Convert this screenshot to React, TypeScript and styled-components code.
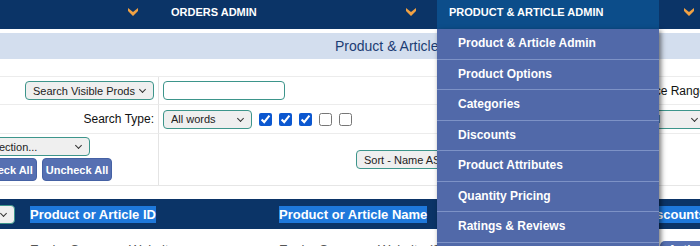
import React from "react";
import styled, { createGlobalStyle } from "styled-components";

const GlobalStyle = createGlobalStyle`
  html, body {
    margin: 0;
    padding: 0;
    background: #fff;
    overflow: hidden;
  }
  body {
    font-family: "Liberation Sans", Arial, sans-serif;
    width: 700px;
    height: 246px;
  }
`;

const Page = styled.div`
  position: relative;
  width: 700px;
  height: 246px;
  overflow: hidden;
`;

const NavBar = styled.nav`
  display: flex;
  height: 29px;
  background: #0b3467;
  margin-left: -119px;
  width: max-content;
`;

const NavItem = styled.div`
  display: flex;
  height: 100%;
`;

const NavLink = styled.a<{ $active?: boolean }>`
  display: block;
  width: 222px;
  box-sizing: border-box;
  padding-left: 12px;
  line-height: 25px;
  background: ${(p) => (p.$active ? "#0c4d8a" : "transparent")};
  color: #fff;
  font-size: 11px;
  font-weight: bold;
  text-transform: uppercase;
  text-decoration: none;
  white-space: nowrap;
`;

const ChevronSlot = styled.span`
  display: flex;
  align-items: flex-start;
  width: 56px;
  box-sizing: border-box;
  padding-left: 25px;
  padding-top: 8px;
`;

const Chevron = () => (
  <svg width="10" height="8" viewBox="0 0 10 8">
    <path d="M0 0 L5 4 L10 0 L10 3 L5 8 L0 3 Z" fill="#f1a143" />
  </svg>
);

const TitleBar = styled.div`
  margin-top: 4px;
  height: 26px;
  background: #d3deee;
  color: #1c3d74;
  font-size: 14px;
  line-height: 27px;
  padding-left: 335px;
  white-space: nowrap;
`;

const FormGrid = styled.div`
  display: grid;
  grid-template-columns: 187px 477px 200px;
  grid-template-rows: 28px 29px 51px;
  margin-top: 17px;
  margin-left: -28px;
  width: max-content;
  border-top: 1px solid #ececec;
  border-bottom: 1px solid #e6e6e6;
`;

const Cell = styled.div<{ $align?: "left" | "right"; $stack?: boolean; $last?: boolean }>`
  display: flex;
  flex-direction: ${(p) => (p.$stack ? "column" : "row")};
  align-items: ${(p) => (p.$stack ? "flex-start" : "center")};
  justify-content: ${(p) => (p.$align === "right" ? "flex-end" : "flex-start")};
  gap: ${(p) => (p.$stack ? "2px" : "0")};
  padding: ${(p) => (p.$stack ? "3px 4px" : "0 4px")};
  box-sizing: border-box;
  border-bottom: ${(p) => (p.$last ? "none" : "1px solid #ececec")};
  font-size: 12px;
  color: #111;
  white-space: nowrap;
`;

const LeftCell = styled(Cell)`
  border-right: 1px solid #e4e4e4;
`;

const SelectWrap = styled.span<{ $offset?: number }>`
  position: relative;
  display: inline-flex;
  margin-left: ${(p) => p.$offset ?? 0}px;

  &::after {
    content: "";
    position: absolute;
    right: 9px;
    top: 6px;
    width: 4px;
    height: 4px;
    border-right: 1.2px solid #333;
    border-bottom: 1.2px solid #333;
    transform: rotate(45deg);
    pointer-events: none;
  }
`;

const Select = styled.select<{ $w: number }>`
  appearance: none;
  width: ${(p) => p.$w}px;
  height: 19px;
  box-sizing: border-box;
  border: 1px solid #3d958b;
  border-radius: 4px;
  background: #efefef;
  color: #222;
  font-family: "Liberation Sans", Arial, sans-serif;
  font-size: 11px;
  padding: 0 14px 0 7px;
`;

const TextInput = styled.input`
  width: 122px;
  height: 19px;
  box-sizing: border-box;
  border: 1px solid #3d958b;
  border-radius: 4px;
  background: #fff;
`;

const Check = styled.input.attrs({ type: "checkbox" })`
  width: 13px;
  height: 13px;
  margin: 0 0 0 7px;
  accent-color: #0b57d0;
`;

const ButtonRow = styled.div`
  display: flex;
  gap: 5px;
  margin-left: 3px;
`;

const Button = styled.button`
  height: 23px;
  padding: 0 3px;
  background: #5670b2;
  border: 1px solid #4561a4;
  border-radius: 4px;
  color: #fff;
  font-family: "Liberation Sans", Arial, sans-serif;
  font-size: 11px;
  font-weight: bold;
`;

const HeaderBar = styled.div`
  display: flex;
  align-items: center;
  height: 30px;
  margin-top: 13px;
  background: #0b3467;
`;

const HeaderCell = styled.div<{ $w: number }>`
  flex: 0 0 ${(p) => p.$w}px;
  display: flex;
  align-items: center;
  white-space: nowrap;
`;

const Highlight = styled.span`
  background: #1e78db;
  color: #fff;
  font-size: 13px;
  font-weight: bold;
  line-height: 17px;
`;

const DataRow = styled.div`
  display: flex;
  padding-top: 13px;
  font-size: 13px;
  line-height: 15px;
  color: #555;
`;

const DataCell = styled.div<{ $w: number }>`
  flex: 0 0 ${(p) => p.$w}px;
  white-space: nowrap;
`;

const SmallButton = styled.span`
  display: inline-block;
  padding: 2px 8px;
  border-radius: 5px;
  background: #5670b2;
  color: #fff;
  font-weight: bold;
  font-size: 12px;
  margin-top: -5px;
`;

const Menu = styled.ul`
  position: absolute;
  top: 29px;
  left: 437px;
  width: 222px;
  margin: 0;
  padding: 0;
  list-style: none;
  background: #5169a9;
  box-shadow: 2px 2px 5px rgba(0, 0, 0, 0.55);
`;

const MenuItem = styled.li`
  height: 29.5px;
  line-height: 29px;
  border-bottom: 1px solid #7d92c6;
  padding-left: 21px;
  color: #fff;
  font-size: 12px;
  font-weight: bold;
  white-space: nowrap;
`;

const navItems = ["", "Orders Admin", "Product & Article Admin"];
const menuItems = [
  "Product & Article Admin",
  "Product Options",
  "Categories",
  "Discounts",
  "Product Attributes",
  "Quantity Pricing",
  "Ratings & Reviews",
  "Product Reports",
];

export default function App() {
  return (
    <Page>
      <GlobalStyle />
      <NavBar>
        {navItems.map((label, i) => (
          <NavItem key={i}>
            <NavLink $active={i === 2}>{label}</NavLink>
            <ChevronSlot>
              <Chevron />
            </ChevronSlot>
          </NavItem>
        ))}
      </NavBar>

      <TitleBar>Product &amp; Article Admin</TitleBar>

      <FormGrid>
        <LeftCell $align="right">
          <SelectWrap>
            <Select $w={129} defaultValue="vis">
              <option value="vis">Search Visible Prods</option>
            </Select>
          </SelectWrap>
        </LeftCell>
        <Cell>
          <TextInput />
        </Cell>
        <Cell>Price Range</Cell>

        <LeftCell $align="right">Search Type:</LeftCell>
        <Cell>
          <SelectWrap>
            <Select $w={89} defaultValue="all">
              <option value="all">All words</option>
            </Select>
          </SelectWrap>
          <Check defaultChecked />
          <Check defaultChecked />
          <Check defaultChecked />
          <Check />
          <Check />
        </Cell>
        <Cell>
          <SelectWrap>
            <Select $w={66} defaultValue="any">
              <option value="any">All</option>
            </Select>
          </SelectWrap>
        </Cell>

        <LeftCell $stack $last>
          <SelectWrap $offset={-1}>
            <Select $w={115} defaultValue="sel">
              <option value="sel">Selection...</option>
            </Select>
          </SelectWrap>
          <ButtonRow>
            <Button>Check All</Button>
            <Button>Uncheck All</Button>
          </ButtonRow>
        </LeftCell>
        <Cell $last>
          <SelectWrap $offset={193}>
            <Select $w={130} defaultValue="asc">
              <option value="asc">Sort - Name ASC</option>
            </Select>
          </SelectWrap>
        </Cell>
        <Cell $last />
      </FormGrid>

      <HeaderBar>
        <HeaderCell $w={30}>
          <SelectWrap $offset={-20}>
            <Select $w={35} defaultValue="a">
              <option value="a"></option>
            </Select>
          </SelectWrap>
        </HeaderCell>
        <HeaderCell $w={249}>
          <Highlight>Product or Article ID</Highlight>
        </HeaderCell>
        <HeaderCell $w={364}>
          <Highlight>Product or Article Name</Highlight>
        </HeaderCell>
        <HeaderCell $w={80}>
          <Highlight>Discounts</Highlight>
        </HeaderCell>
      </HeaderBar>

      <DataRow>
        <DataCell $w={30} />
        <DataCell $w={249}>Evoke Company Website</DataCell>
        <DataCell $w={381}>Evoke Company Website (2)</DataCell>
        <DataCell $w={60}>
          <SmallButton>Active</SmallButton>
        </DataCell>
      </DataRow>

      <Menu>
        {menuItems.map((m) => (
          <MenuItem key={m}>{m}</MenuItem>
        ))}
      </Menu>
    </Page>
  );
}
